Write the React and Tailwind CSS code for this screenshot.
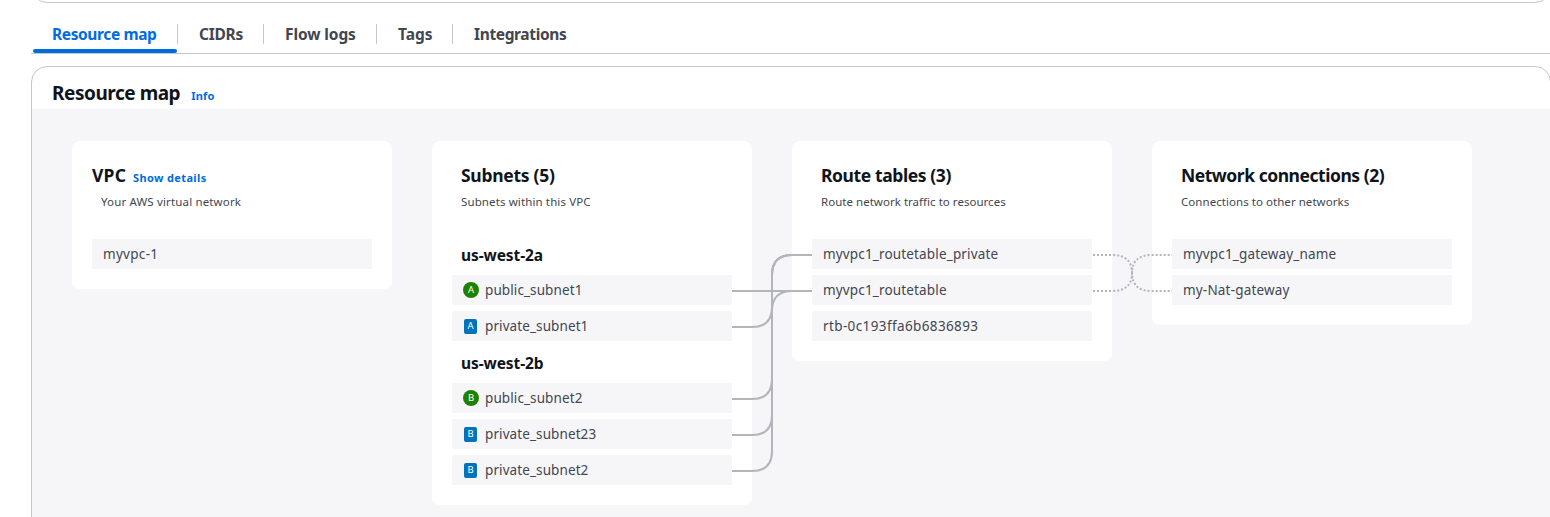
const tabs = [
  { label: "Resource map", active: true, className: "w-[147px] tracking-[-0.38px]" },
  { label: "CIDRs", className: "w-[86px] tracking-[-0.25px]" },
  { label: "Flow logs", className: "w-[113px] tracking-[-0.1px]" },
  { label: "Tags", className: "w-[76px]" },
  { label: "Integrations", className: "w-[134px] tracking-[-0.36px]" },
];

function Tab({ label, active, last, className }) {
  return (
    <button
      className={`relative flex h-[38px] shrink-0 items-center pl-[21px] text-left text-[15.5px] leading-6 font-bold whitespace-nowrap ${
        active ? "text-[#006ce0]" : "text-[#424650]"
      } ${className}`}
    >
      {label}
      {!last && <span className="absolute top-[9px] right-0 h-5 w-px bg-[#c6c6cd]" />}
      {active && <span className="absolute right-px bottom-0 left-0.5 h-1 rounded-[3px] bg-[#006ce0]" />}
    </button>
  );
}

function Card({ title, titleClass = "", action, subtitle, subtitleClass = "", indent = "pl-[9px]", children }) {
  return (
    <section className="w-80 shrink-0 rounded-lg bg-white px-5 pt-[22px] pb-5">
      <div className={`flex h-6 items-baseline gap-[7px] ${indent}`}>
        <h3 className={`text-[17.5px] leading-6 font-bold whitespace-nowrap text-[#0f141a] ${titleClass}`}>{title}</h3>
        {action}
      </div>
      <p className={`mt-[5px] h-5 pl-[9px] text-[11.5px] leading-5 whitespace-nowrap text-[#424650] ${subtitleClass}`}>{subtitle}</p>
      <div className="mt-[27px] flex flex-col gap-1.5">{children}</div>
    </section>
  );
}

function Zone({ name }) {
  return (
    <h4 className="flex h-[30px] items-center pt-1 pl-[9px] text-[15.5px] font-bold tracking-[-0.1px] text-[#0f141a]">{name}</h4>
  );
}

function Badge({ kind, letter }) {
  const shape = kind === "public" ? "h-4 w-4 rounded-full bg-[#1d8102]" : "mx-px mr-0.5 h-[15px] w-[13px] rounded-xs bg-[#0073bb]";
  return (
    <span className={`flex shrink-0 items-center justify-center text-[9.5px] leading-none text-white ${shape}`}>{letter}</span>
  );
}

function Row({ label, kind, letter, className = "" }) {
  return (
    <div className="flex h-[30px] items-center gap-1.5 rounded-xs bg-[#f6f6f9] pl-[11px] text-[13.5px] leading-5 whitespace-nowrap text-[#424650]">
      {kind && <Badge kind={kind} letter={letter} />}
      <span className={className}>{label}</span>
    </div>
  );
}

function Connectors() {
  return (
    <svg className="pointer-events-none absolute top-0 left-0" width="1518" height="408" fill="none" stroke="#b4b4bb" strokeWidth="2">
      <g transform="translate(-32 -109)">
        <path d="M732 291H812" />
        <path d="M732 327H752Q772 327 772 307V275Q772 255 792 255H812" />
        <path d="M732 399H752Q772 399 772 379V311Q772 291 792 291H812" />
        <path d="M732 435H752Q772 435 772 415V275Q772 255 792 255H812" />
        <path d="M732 471H752Q772 471 772 451V275Q772 255 792 255H812" />
        <g strokeDasharray="2 2" strokeDashoffset="-1">
          <path d="M1092 255H1112Q1132 255 1132 273Q1132 291 1152 291H1172" />
          <path d="M1092 291H1112Q1132 291 1132 273Q1132 255 1152 255H1172" />
        </g>
      </g>
    </svg>
  );
}

export default function App() {
  return (
    <main className="h-[517px] w-full overflow-hidden bg-white pl-[31px] font-['Noto_Sans','Liberation_Sans',sans-serif]">
      <div className="h-[3px] w-[1520px] overflow-hidden">
        <div className="-mt-[37px] h-10 rounded-2xl border border-[#c6c6cd]" />
      </div>

      <nav className="mt-3 flex h-[39px] border-b border-[#c6c6cd]">
        {tabs.map((tab, i) => (
          <Tab key={tab.label} {...tab} last={i === tabs.length - 1} />
        ))}
      </nav>

      <div className="mt-3 h-[480px] w-[1520px] overflow-hidden rounded-2xl border border-[#c6c6cd]">
        <header className="flex h-[42px] items-baseline gap-[11px] pt-[11px] pl-5">
          <h2 className="text-[19px] leading-[30px] font-bold tracking-[-0.46px] text-[#0f141a]">Resource map</h2>
          <a className="text-[11px] font-bold tracking-[0.2px] text-[#006ce0]">Info</a>
        </header>

        <div className="relative flex h-full items-start gap-10 bg-[#f6f6f9] pt-8 pl-10">
          <Card
            title="VPC"
            titleClass="tracking-[0.2px]"
            indent=""
            action={<a className="text-[11px] font-bold tracking-[0.36px] text-[#006ce0]">Show details</a>}
            subtitle="Your AWS virtual network"
            subtitleClass="tracking-[0.15px]"
          >
            <Row label="myvpc-1" className="tracking-[0.3px]" />
          </Card>

          <Card title="Subnets (5)" titleClass="tracking-[-0.28px]" subtitle="Subnets within this VPC" subtitleClass="tracking-[0.12px]">
            <Zone name="us-west-2a" />
            <Row kind="public" letter="A" label="public_subnet1" className="tracking-[0.1px]" />
            <Row kind="private" letter="A" label="private_subnet1" className="tracking-[0.1px]" />
            <Zone name="us-west-2b" />
            <Row kind="public" letter="B" label="public_subnet2" className="tracking-[0.1px]" />
            <Row kind="private" letter="B" label="private_subnet23" className="tracking-[0.1px]" />
            <Row kind="private" letter="B" label="private_subnet2" className="tracking-[0.1px]" />
          </Card>

          <Card
            title="Route tables (3)"
            titleClass="tracking-[-0.4px]"
            subtitle="Route network traffic to resources"
            subtitleClass="tracking-[0.03px]"
          >
            <Row label="myvpc1_routetable_private" className="tracking-[0.16px]" />
            <Row label="myvpc1_routetable" className="tracking-[0.16px]" />
            <Row label="rtb-0c193ffa6b6836893" className="tracking-[0.38px]" />
          </Card>

          <Card
            title="Network connections (2)"
            titleClass="tracking-[-0.47px]"
            subtitle="Connections to other networks"
            subtitleClass="tracking-[0.05px]"
          >
            <Row label="myvpc1_gateway_name" className="tracking-[0.16px]" />
            <Row label="my-Nat-gateway" className="tracking-[0.18px]" />
          </Card>
          <Connectors />
        </div>
      </div>
    </main>
  );
}
